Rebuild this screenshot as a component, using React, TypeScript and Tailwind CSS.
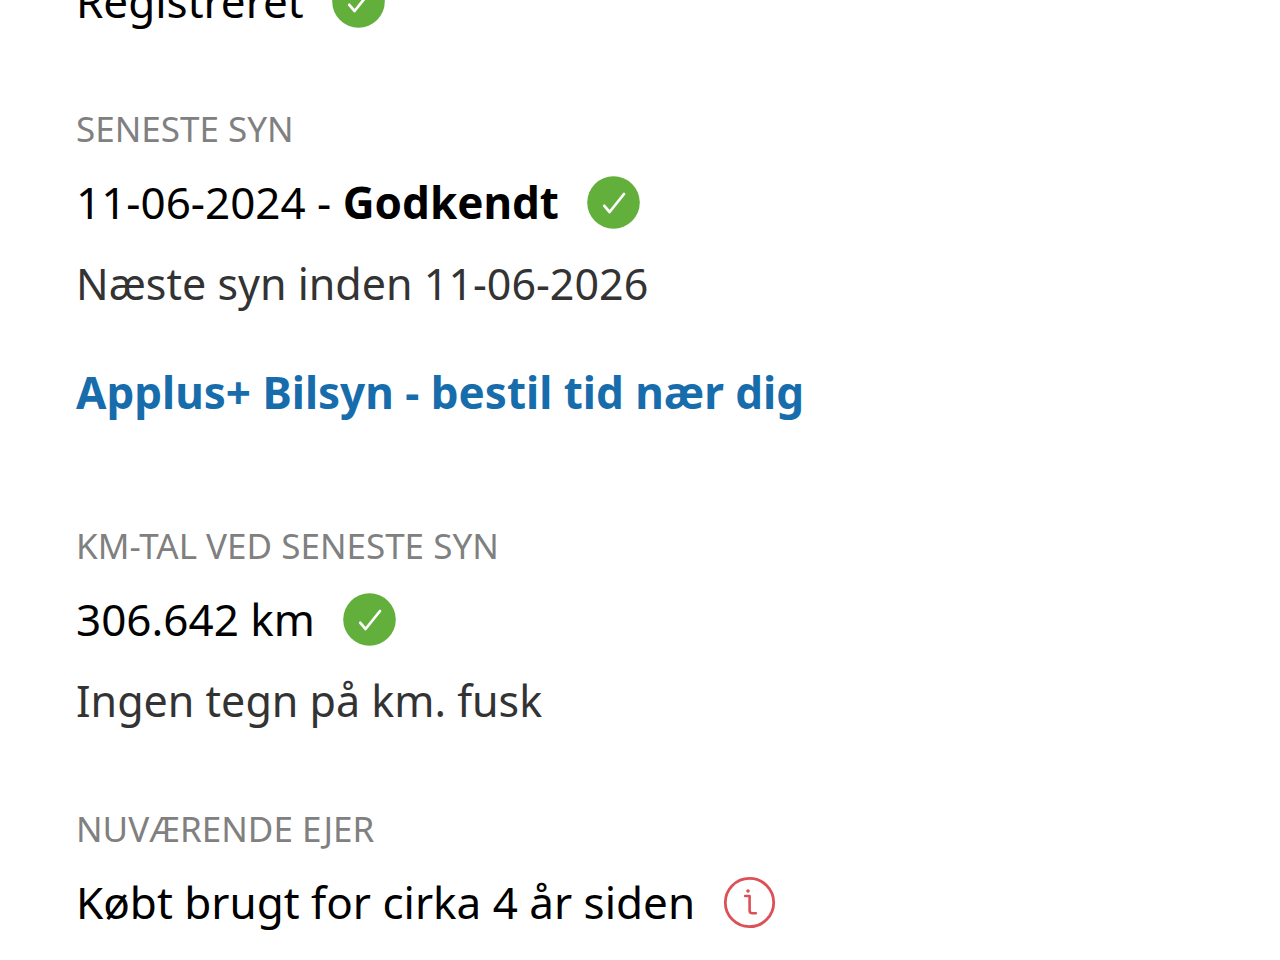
import React from "react";

function CheckIcon() {
  return (
    <svg viewBox="0 0 53 53" className="size-[53px] shrink-0" fill="none" role="img" aria-label="OK">
      <circle cx="26.5" cy="26.5" r="26.3" fill="#62b03b" />
      <path
        d="M17.3 29.8L22.6 36L37 18"
        stroke="#fff"
        strokeWidth="2.7"
        strokeLinecap="round"
        strokeLinejoin="round"
      />
    </svg>
  );
}

function InfoIcon() {
  return (
    <svg viewBox="0 0 53 53" className="size-[53px] shrink-0" fill="none" role="img" aria-label="Info">
      <circle cx="26.5" cy="26.5" r="24.2" stroke="#dc5158" strokeWidth="2.8" />
      <circle cx="25" cy="15" r="1.8" fill="#dc5158" />
      <path
        d="M22.2 20H26.6V34.5Q26.6 37.3 29.4 37.3H32.8"
        stroke="#dc5158"
        strokeWidth="2.6"
        strokeLinecap="round"
        strokeLinejoin="round"
      />
    </svg>
  );
}

interface IfactSection {
  label?: string;
  icon: React.ReactNode;
  note?: string;
  link?: string;
  children: React.ReactNode;
}

function FactSection({ label, icon, note, link, children }: IfactSection) {
  return (
    <section>
      {label && (
        <h2 className="mb-[13px] text-[35px] leading-[48px] text-[#808080] uppercase">{label}</h2>
      )}
      <div className="flex items-center gap-7 text-[44px] leading-[72px] text-black">
        <p>{children}</p>
        {icon}
      </div>
      {note && <p className="mt-[10px] text-[43px] leading-[72px] text-[#333333]">{note}</p>}
      {link && (
        <a
          href="#bilsyn"
          className="mt-9 mb-[26px] block text-[44px] leading-[72px] font-bold text-[#176dac]"
        >
          {link}
        </a>
      )}
    </section>
  );
}

export default function App() {
  return (
    <div className="h-screen overflow-hidden bg-white">
      <main className="-mt-[35px] flex flex-col gap-[68px] px-19 font-['Noto_Sans',sans-serif]">
        <FactSection icon={<CheckIcon />}>Registreret</FactSection>
        <FactSection
          label="Seneste syn"
          icon={<CheckIcon />}
          note="Næste syn inden 11-06-2026"
          link="Applus+ Bilsyn - bestil tid nær dig"
        >
          11-06-2024 - <strong className="font-bold">Godkendt</strong>
        </FactSection>
        <FactSection label="Km-tal ved seneste syn" icon={<CheckIcon />} note="Ingen tegn på km. fusk">
          306.642 km
        </FactSection>
        <FactSection label="Nuværende ejer" icon={<InfoIcon />}>
          Købt brugt for cirka 4 år siden
        </FactSection>
      </main>
    </div>
  );
}
